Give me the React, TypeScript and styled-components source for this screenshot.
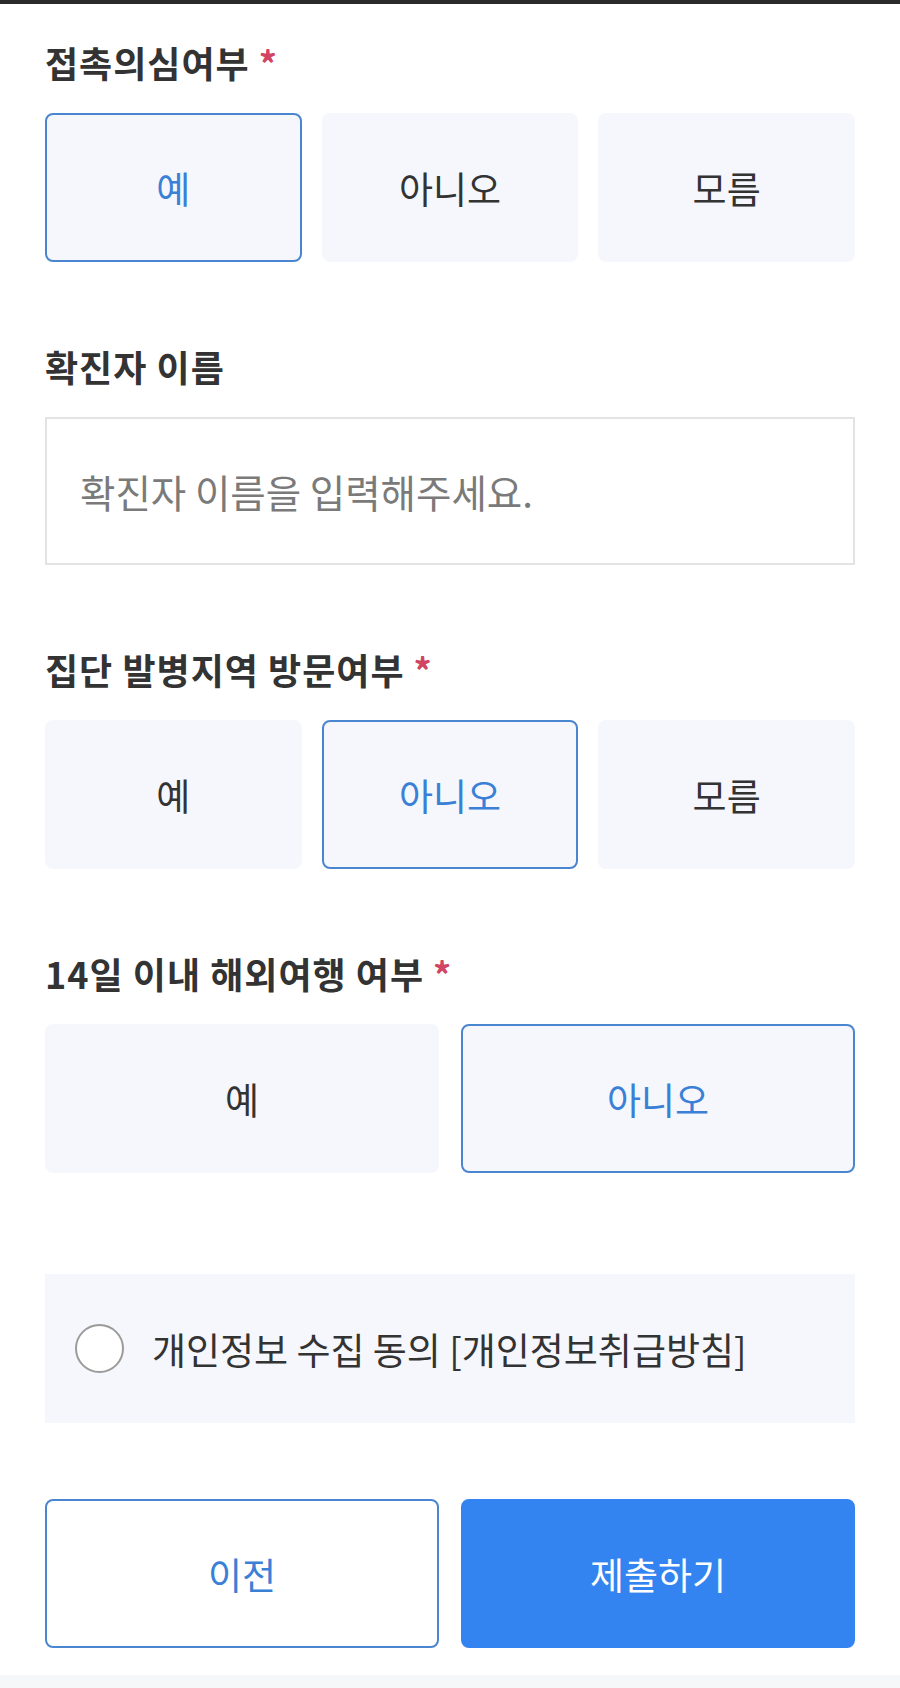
import React, { useState } from "react";
import styled, { createGlobalStyle, css } from "styled-components";

const GlobalStyle = createGlobalStyle`
  html, body {
    margin: 0;
    padding: 0;
    background: #f6f7f9;
  }
  body {
    font-family: "Noto Sans CJK KR", "Noto Sans", sans-serif;
    color: #333;
  }
  * { box-sizing: border-box; }
`;

const Page = styled.div`
  background: #ffffff;
  border-top: 4px solid #2b2b2b;
  padding: 38px 45px 27px;
  display: flex;
  flex-direction: column;
`;

const Form = styled.div`
  display: flex;
  flex-direction: column;
  gap: 84px;
`;

const Section = styled.section`
  display: flex;
  flex-direction: column;
  gap: 31px;
`;

const Label = styled.h2`
  margin: 0;
  font-size: 36px;
  line-height: 40px;
  font-weight: 700;
  color: #333;
  letter-spacing: 1px;
`;

const Star = styled.span`
  color: #d14463;
  margin-left: 9px;
`;

const Options = styled.div<{ $cols: number; $gap: number }>`
  display: grid;
  grid-template-columns: repeat(${(p) => p.$cols}, 1fr);
  gap: ${(p) => p.$gap}px;
`;

const Option = styled.button<{ $active: boolean }>`
  height: 149px;
  border-radius: 8px;
  background: #f5f7fc;
  border: 2px solid transparent;
  font-family: inherit;
  font-size: 37px;
  color: #333;
  cursor: pointer;
  padding: 0;
  ${(p) =>
    p.$active &&
    css`
      border-color: #4a86d0;
      color: #3a80d6;
    `}
`;

const Input = styled.input`
  height: 148px;
  width: 100%;
  border: 2px solid #e3e3e3;
  background: #fff;
  padding: 0 0 0 33px;
  font-family: inherit;
  font-size: 38.5px;
  color: #333;
  outline: none;
  &::placeholder {
    color: #7a7a7a;
  }
`;

const Consent = styled.label`
  margin-top: 101px;
  height: 149px;
  background: #f5f7fc;
  display: flex;
  align-items: center;
  padding-left: 30px;
  gap: 28px;
  font-size: 37px;
  color: #333;
  cursor: pointer;
`;

const Radio = styled.span`
  width: 49px;
  height: 49px;
  border-radius: 50%;
  border: 2px solid #9b9b9b;
  background: #fff;
  flex: none;
`;

const Actions = styled.div`
  margin-top: 76px;
  display: grid;
  grid-template-columns: 1fr 1fr;
  gap: 22px;
`;

const ActionButton = styled.button<{ $primary?: boolean }>`
  height: 149px;
  border-radius: 8px;
  font-family: inherit;
  font-size: 37px;
  cursor: pointer;
  ${(p) =>
    p.$primary
      ? css`
          background: #3383f0;
          border: 2px solid #3383f0;
          color: #fff;
        `
      : css`
          background: #fff;
          border: 2px solid #4a86d0;
          color: #3a80d6;
        `}
`;

type ChoiceProps = {
  label: string;
  required?: boolean;
  options: string[];
  value: string;
  gap: number;
  onChange: (v: string) => void;
};

function Choice({ label, required, options, value, gap, onChange }: ChoiceProps) {
  return (
    <Section>
      <Label>
        {label}
        {required && <Star>*</Star>}
      </Label>
      <Options $cols={options.length} $gap={gap}>
        {options.map((o) => (
          <Option key={o} $active={o === value} onClick={() => onChange(o)}>
            {o}
          </Option>
        ))}
      </Options>
    </Section>
  );
}

export default function App() {
  const [contact, setContact] = useState("예");
  const [visit, setVisit] = useState("아니오");
  const [travel, setTravel] = useState("아니오");

  return (
    <>
      <GlobalStyle />
      <Page>
        <Form>
          <Choice
            label="접촉의심여부"
            required
            options={["예", "아니오", "모름"]}
            value={contact}
            gap={20}
            onChange={setContact}
          />
          <Section>
            <Label>확진자 이름</Label>
            <Input placeholder="확진자 이름을 입력해주세요." />
          </Section>
          <Choice
            label="집단 발병지역 방문여부"
            required
            options={["예", "아니오", "모름"]}
            value={visit}
            gap={20}
            onChange={setVisit}
          />
          <Choice
            label="14일 이내 해외여행 여부"
            required
            options={["예", "아니오"]}
            value={travel}
            gap={22}
            onChange={setTravel}
          />
        </Form>
        <Consent>
          <Radio />
          개인정보 수집 동의 [개인정보취급방침]
        </Consent>
        <Actions>
          <ActionButton>이전</ActionButton>
          <ActionButton $primary>제출하기</ActionButton>
        </Actions>
      </Page>
    </>
  );
}
